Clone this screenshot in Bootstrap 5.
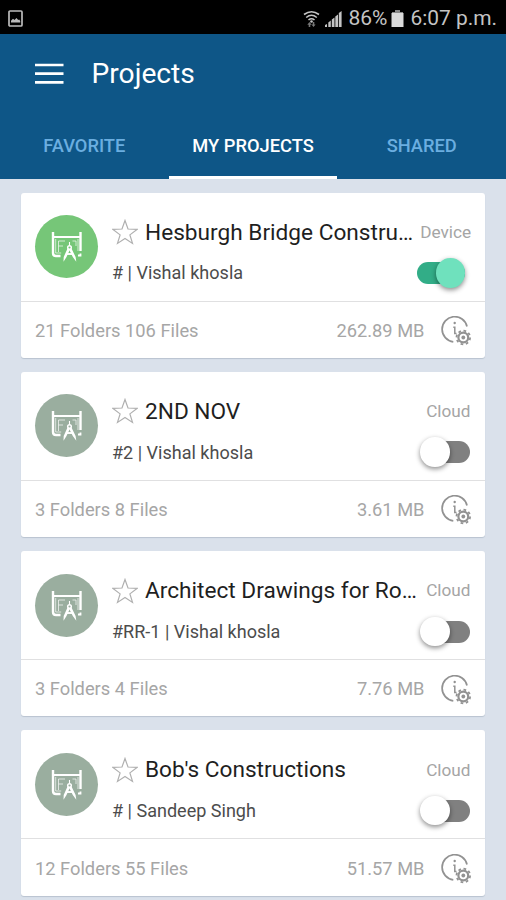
<!DOCTYPE html>
<html lang="en">
<head>
<meta charset="utf-8">
<meta name="viewport" content="width=device-width, initial-scale=1">
<title>Projects</title>
<link href="https://cdn.jsdelivr.net/npm/bootstrap@5.3.0/dist/css/bootstrap.min.css" rel="stylesheet">
<style>
body{font-family:Roboto,"Liberation Sans",sans-serif;background:#dae1eb;height:900px;overflow:hidden;line-height:1}
svg{display:block;flex:none}
.statusbar{height:34px;background:#000;color:#c4c4c4;font-size:20.700px;padding:3px 9px 0 7px}
.pct{margin:0 4px 0 5px;font-size:21px}
.clock{margin-left:6px;font-size:20.900px}
.appbar{height:144.500px;background:#0e5687}
.appbar-top{height:79px;padding-left:35px;gap:27.500px}
.appbar-title{font-size:28.200px;color:#fff}
.tabs-row{height:65.500px}
.tab-item{flex:1;color:#6baee0;font-size:18.300px;font-weight:500;border-bottom:3px solid transparent;text-decoration:none;padding-top:3px}
.tab-item.current{color:#fff;border-color:#fff}
.project-list{padding:14px 21px 0;gap:14px}
.project-card{height:165.300px;border:0;border-radius:3px;box-shadow:0 1px 1px #b9c3d0;flex:none}
.card-main{height:109px;padding:0 14.500px 0 14px;border-bottom:1.500px solid #e0e0e1;gap:14px}
.avatar{width:63px;height:63px;background:#9aae9f;color:#fff}
.avatar.synced{background:#76c678}
.card-text{padding-top:15px}
.line-one{height:38px;gap:7px}
.line-two{height:44px}
.project-name,.place,.owner{padding-top:1px}
.project-name{font-size:22.650px;color:#1f1f1f;line-height:30px}
.place{font-size:17.200px;color:#a5a5a5}
.owner{font-size:18.050px;color:#4c4c4c}
.card-foot{height:56px;padding:3px 14.500px 0 14px;color:#a6a6a6;font-size:18.300px}
.switch-box{width:54.500px;height:32px;padding-top:5px}
.track{height:22px;width:49px;margin-left:5px;border-radius:11px;background:#808080}
.thumb{width:29.500px;height:29.500px;border-radius:50%;background:#fff;box-shadow:0 2px 5px rgba(0,0,0,.45);margin:-4px 0 0 -1px}
.on .track{margin-left:0;width:48px;background:#32ad87}
.on .thumb{margin-left:19.500px;background:#6fe1bd}
</style>
<script src="https://cdn.jsdelivr.net/npm/bootstrap@5.3.0/dist/js/bootstrap.bundle.min.js"></script>
</head>
<body>
<svg class="d-none">
<symbol id="plan" viewBox="0 0 63 63"><g fill="none" stroke="currentColor"><path stroke-width="2.400" d="M18 17V38q0 3 3 3h4.500M45.500 17V36"/><path stroke-width="2" d="M18 22h27.500"/><path stroke-width=".8" opacity=".85" d="M20.700 24v14h5.500M43 24v12M23.500 37V26h6.500M23.500 31h4.500M37.500 26h3.500v5"/><path stroke-width="1.800" d="M45.500 38.500v2h-2.500"/><path stroke-width="1.900" d="M31.500 39h6"/><path stroke-width="1.100" d="M34.500 27v4"/><circle cx="34.500" cy="32.500" r="1.800" stroke-width="1.500"/></g><path fill="currentColor" d="M32.500 33.500L35 34.500 31.500 42 28.500 46.800 28.700 42zM36.500 33.500L34 34.500 37.800 42 41.300 46.800 40.600 42z"/></symbol>
<symbol id="star" viewBox="0 0 26 26"><path fill="none" stroke="#b0b0b0" stroke-width="1.200" d="M13 1.500 L16 10 L25 10.400 L17.900 15.900 L20.500 24.400 L13 19.400 L5.500 24.400 L8.100 15.900 L1 10.400 L10 10Z"/></symbol>
<symbol id="info" viewBox="0 0 30 30"><g fill="none" stroke="#929292"><path stroke-width="1.700" d="M26 10.500A12.600 12.600 0 1 0 12.300 25.800"/><path stroke-width="1.500" d="M12.300 11.300h1.500v6.200h1.700"/><circle cx="22.300" cy="21.500" r="4.900" stroke-width="2.200"/><circle cx="22.300" cy="21.500" r="6.800" stroke-width="1.800" stroke-dasharray="2.700 2.641"/></g><circle cx="13.700" cy="7" r="1.200" fill="#929292"/><circle cx="22.300" cy="21.500" r="1.900" fill="#929292"/></symbol>
</svg>
<header>
<div class="statusbar d-flex align-items-center">
<svg width="17" height="18" viewBox="0 0 17 18"><rect x="2" y="1" width="13" height="15" rx="1" fill="none" stroke="#bbb" stroke-width="1.700"/><path fill="#bbb" d="M4 12.500v-1.800l2-2 1.500 1.300L9.500 8l1.700 2 1-.6 1 1.500v1.600z"/></svg>
<svg class="ms-auto" width="17" height="18" viewBox="0 0 17 18"><g fill="none" stroke="#c4c4c4" stroke-width="1.600"><path d="M1 4.500Q8.500-1 16 4.500M3.200 7.500Q8.500 3 13.800 7.500M5.500 10Q8.500 7.500 11.500 10"/></g><circle cx="8.500" cy="11.500" r="1.300" fill="#c4c4c4"/><path fill="#777" d="M6.500 12l2.200 2.700H7.300V17H5.700v-2.300H4.300zM10.500 17l-2-2.600h1.300V12h1.500v2.400h1.300z"/></svg>
<svg class="ms-1" width="19" height="18" viewBox="0 0 19 18"><path fill="#c4c4c4" d="M1 17v-2l2-1v3zM4.300 17v-4.500l2.500-2V17zM7.800 17V9.500l2.700-2V17zM11.300 17V6.500L14 4.500V17zM14.800 17V3l2.800-2v16z"/></svg>
<span class="pct">86%</span>
<svg class="batt" width="13" height="18" viewBox="0 0 13 18"><path fill="#888" d="M4 0h5v2h3v1.500H1V2h3z"/><path fill="#dadada" d="M.5 3h12v14H.5z"/></svg>
<span class="clock">6:07 p.m.</span>
</div>
<div class="appbar">
<div class="appbar-top d-flex align-items-center">
<svg width="29" height="22" viewBox="0 0 29 22"><path stroke="#fff" stroke-width="2.700" d="M0 2h28.500M0 10.700h28.500M0 19.400h28.500"/></svg>
<h1 class="appbar-title m-0 fw-normal">Projects</h1>
</div>
<nav class="tabs-row d-flex">
<a class="tab-item d-flex align-items-center justify-content-center">FAVORITE</a>
<a class="tab-item current d-flex align-items-center justify-content-center">MY PROJECTS</a>
<a class="tab-item d-flex align-items-center justify-content-center">SHARED</a>
</nav>
</div>
</header>
<main class="project-list d-flex flex-column">
<article class="project-card card">
<div class="card-main d-flex align-items-center">
<div class="avatar synced rounded-circle"><svg width="63" height="63"><use href="#plan"/></svg></div>
<div class="card-text flex-grow-1">
<div class="line-one d-flex align-items-center"><svg width="26" height="26"><use href="#star"/></svg><div class="project-name text-nowrap">Hesburgh Bridge Constru…</div><span class="place ms-auto">Device</span></div>
<div class="line-two d-flex align-items-center justify-content-between"><span class="owner"># | Vishal khosla</span><div class="switch-box on"><div class="track d-flex"><div class="thumb"></div></div></div></div>
</div></div>
<div class="card-foot d-flex align-items-center"><span>21 Folders 106 Files</span><span class="size ms-auto me-3">262.89 MB</span><svg width="30" height="30"><use href="#info"/></svg></div>
</article>
<article class="project-card card">
<div class="card-main d-flex align-items-center">
<div class="avatar rounded-circle"><svg width="63" height="63"><use href="#plan"/></svg></div>
<div class="card-text flex-grow-1">
<div class="line-one d-flex align-items-center"><svg width="26" height="26"><use href="#star"/></svg><div class="project-name text-nowrap">2ND NOV</div><span class="place ms-auto">Cloud</span></div>
<div class="line-two d-flex align-items-center justify-content-between"><span class="owner">#2 | Vishal khosla</span><div class="switch-box"><div class="track d-flex"><div class="thumb"></div></div></div></div>
</div></div>
<div class="card-foot d-flex align-items-center"><span>3 Folders 8 Files</span><span class="size ms-auto me-3">3.61 MB</span><svg width="30" height="30"><use href="#info"/></svg></div>
</article>
<article class="project-card card">
<div class="card-main d-flex align-items-center">
<div class="avatar rounded-circle"><svg width="63" height="63"><use href="#plan"/></svg></div>
<div class="card-text flex-grow-1">
<div class="line-one d-flex align-items-center"><svg width="26" height="26"><use href="#star"/></svg><div class="project-name text-nowrap">Architect Drawings for Ro…</div><span class="place ms-auto">Cloud</span></div>
<div class="line-two d-flex align-items-center justify-content-between"><span class="owner">#RR-1 | Vishal khosla</span><div class="switch-box"><div class="track d-flex"><div class="thumb"></div></div></div></div>
</div></div>
<div class="card-foot d-flex align-items-center"><span>3 Folders 4 Files</span><span class="size ms-auto me-3">7.76 MB</span><svg width="30" height="30"><use href="#info"/></svg></div>
</article>
<article class="project-card card">
<div class="card-main d-flex align-items-center">
<div class="avatar rounded-circle"><svg width="63" height="63"><use href="#plan"/></svg></div>
<div class="card-text flex-grow-1">
<div class="line-one d-flex align-items-center"><svg width="26" height="26"><use href="#star"/></svg><div class="project-name text-nowrap">Bob's Constructions</div><span class="place ms-auto">Cloud</span></div>
<div class="line-two d-flex align-items-center justify-content-between"><span class="owner"># | Sandeep Singh</span><div class="switch-box"><div class="track d-flex"><div class="thumb"></div></div></div></div>
</div></div>
<div class="card-foot d-flex align-items-center"><span>12 Folders 55 Files</span><span class="size ms-auto me-3">51.57 MB</span><svg width="30" height="30"><use href="#info"/></svg></div>
</article>
</main>
</body>
</html>
